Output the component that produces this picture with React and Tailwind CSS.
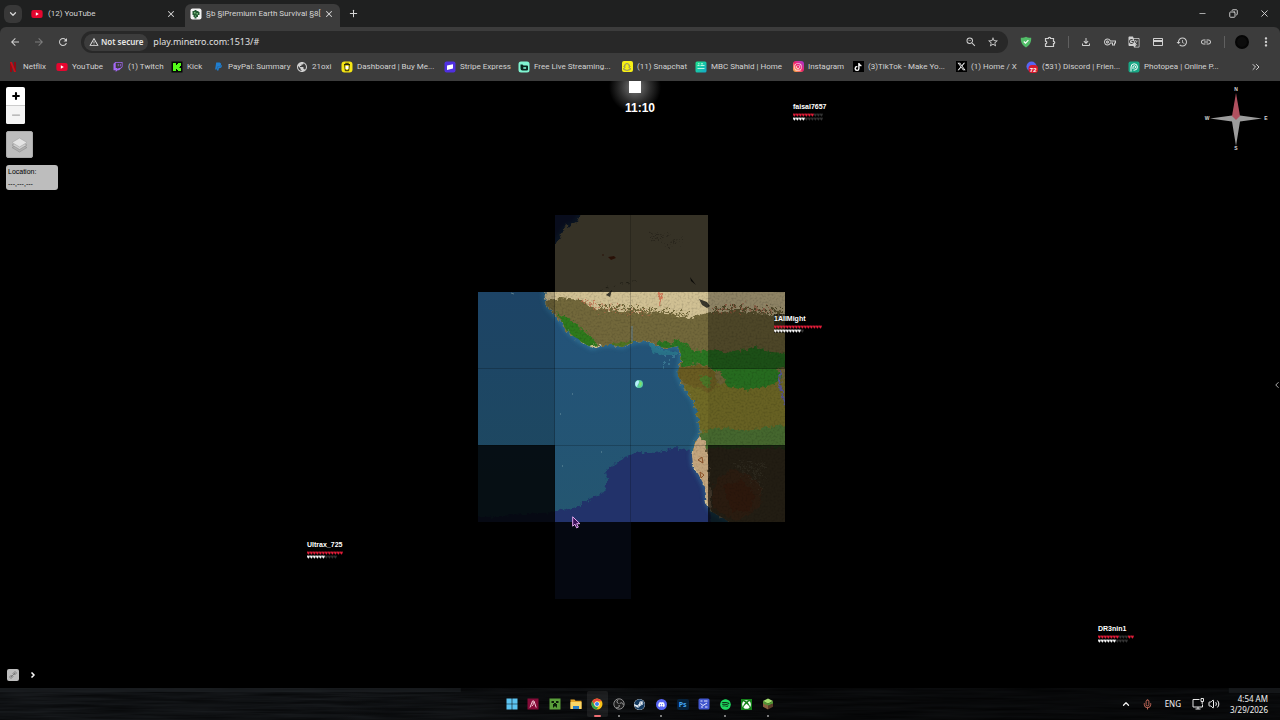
import React, { useState } from 'react';
import { Minus, X, Plus, ChevronDown, ChevronUp, ChevronLeft, ChevronRight, ChevronsRight, Mic, Copy, Volume2 } from 'lucide-react';
import { FaYoutube, FaTwitch, FaPaypal, FaSnapchat, FaInstagram, FaTiktok, FaXTwitter, FaDiscord, FaSteam, FaSpotify, FaXbox } from 'react-icons/fa6';
import {
  MdArrowBack, MdArrowForward, MdRefresh, MdWarningAmber, MdZoomOut, MdStarBorder,
  MdOutlineFileDownload, MdOutlineVpnKey, MdGTranslate, MdCreditCard, MdHistory, MdLink, MdMoreVert, MdPublic
} from 'react-icons/md';

const NetflixIcon = () => (
  <svg viewBox="0 0 12 12" className="w-3 h-3">
    <path d="M3 1h2v10H3z" fill="#8f0b13" />
    <path d="M7 1h2v10H7z" fill="#8f0b13" />
    <path d="M3 1h2l4 10H7z" fill="#c5101b" />
  </svg>
);

const YoutubeIcon = () => <FaYoutube className="w-3 h-3 text-[#e6062f] bg-[linear-gradient(#fff,#fff)] bg-[length:5px_5px] bg-center bg-no-repeat" />;

const KickIcon = () => (
  <svg viewBox="0 0 12 12" className="w-3 h-3">
    <rect x="0.5" y="0.5" width="11" height="11" fill="#050805" />
    <path d="M2 2h3v2h1V3h1V2h3v3H9v1H8v0.500h1V7h1v3H7V9H6V8H5v2H2z" fill="#53fc18" />
  </svg>
);

const StripeIcon = () => (
  <svg viewBox="0 0 12 12" className="w-3 h-3">
    <rect x="0.5" y="0.5" width="11" height="11" rx="2" fill="#4f2fe0" />
    <path d="M3 4.6 9 3.200v4.400L3 9z" fill="#fff" />
  </svg>
);

const CoffeeIcon = () => (
  <svg viewBox="0 0 12 12" className="w-3 h-3">
    <rect x="0.5" y="0.5" width="11" height="11" rx="3" fill="#f5e614" />
    <path d="M3 3.500h6M3.700 3.500 4.300 9.700h3.400l.6-6.200M4.200 2.300h3.600" fill="none" stroke="#2d2908" strokeWidth="1" />
    <path d="M4.500 5h3v3h-3z" fill="#fff" />
  </svg>
);

const StreamIcon = () => (
  <svg viewBox="0 0 12 12" className="w-3 h-3">
    <rect x="0.5" y="0.5" width="11" height="11" rx="2.500" fill="#80f5d2" />
    <path d="M2.500 3.500h2l1 1H9a1 1 0 0 1 1 1v3a1 1 0 0 1-1 1H4.500a2 2 0 0 1-2-2z" fill="#09251d" />
    <path d="M5.300 6.200h2.800v1.600H5.300z" fill="#80f5d2" />
  </svg>
);

const ShahidIcon = () => (
  <svg viewBox="0 0 12 12" className="w-3 h-3">
    <defs>
      <linearGradient id="shahid" x1="0" x2="1" y1="0" y2="1">
        <stop offset="0" stopColor="#1de58b" />
        <stop offset="1" stopColor="#14a7c9" />
      </linearGradient>
    </defs>
    <rect x="0.5" y="0.5" width="11" height="11" rx="1.500" fill="url(#shahid)" />
    <path d="M2.500 4.500h2M5.500 4.500h4M2.500 7.500h7M3 2.800h1.500M6 2.800h2" stroke="#c8ffe8" strokeWidth="0.900" />
  </svg>
);

const PhotopeaIcon = () => (
  <svg viewBox="0 0 12 12" className="w-3 h-3">
    <rect x="0.5" y="0.5" width="11" height="11" rx="2" fill="#18a886" />
    <path d="M3 10.500V6a3.200 3.200 0 1 1 3.200 3.200H5.500M5 8V6a1.300 1.300 0 1 1 1.500 1.300" fill="none" stroke="#fff" strokeWidth="1" />
  </svg>
);

const DiscordBadgeIcon = () => (
  <svg viewBox="0 0 12 12" className="w-3 h-3">
    <circle cx="5.500" cy="5.500" r="5" fill="#5865f2" />
    <rect x="2.500" y="4" width="9.500" height="8" rx="3.500" fill="#d8182c" />
    <text x="7.200" y="10.500" fontSize="6" fontWeight="700" textAnchor="middle" fill="#fff" fontFamily="Liberation Sans, sans-serif">72</text>
  </svg>
);

const Badge = ({ className, children }) => (
  <span className={`w-[11px] h-[11px] flex items-center justify-center ${className}`}>{children}</span>
);

const bookmarks = [
  { label: 'Netflix', width: 'w-[49px]', icon: <NetflixIcon /> },
  { label: 'YouTube', width: 'w-[56px]', icon: <YoutubeIcon /> },
  { label: '(1) Twitch', width: 'w-[59px]', icon: <FaTwitch className="w-[10px] h-[10px] text-[#a468f5]" /> },
  { label: 'Kick', width: 'w-[41px]', icon: <KickIcon /> },
  { label: 'PayPal: Summary', width: 'w-[84px]', icon: <FaPaypal className="w-[9px] h-[9px] text-[#1f7ed0]" /> },
  { label: '21oxi', width: 'w-[45px]', icon: <MdPublic className="w-3 h-3 text-[#d0d0d0]" /> },
  { label: 'Dashboard | Buy Me...', width: 'w-[103px]', icon: <CoffeeIcon /> },
  { label: 'Stripe Express', width: 'w-[74px]', icon: <StripeIcon /> },
  { label: 'Free Live Streaming...', width: 'w-[103px]', icon: <StreamIcon /> },
  { label: '(11) Snapchat', width: 'w-[74px]', icon: <Badge className="bg-[#f7f016] rounded-xs"><FaSnapchat className="w-2 h-2 text-white stroke-[#333] stroke-20" /></Badge> },
  { label: 'MBC Shahid | Home', width: 'w-[97px]', icon: <ShahidIcon /> },
  { label: 'Instagram', width: 'w-[60px]', icon: <Badge className="bg-linear-to-tr from-[#fdb833] via-[#f0186a] to-[#a020d8] rounded-[3px]"><FaInstagram className="w-2 h-2 text-white" /></Badge> },
  { label: '(3)TikTok - Make Yo...', width: 'w-[103px]', icon: <Badge className="bg-black"><FaTiktok className="w-2 h-2 text-white" /></Badge> },
  { label: '(1) Home / X', width: 'w-[71px]', icon: <Badge className="bg-black"><FaXTwitter className="w-[9px] h-[9px] text-white" /></Badge> },
  { label: '(531) Discord | Frien...', width: 'w-[102px]', icon: <DiscordBadgeIcon /> },
  { label: 'Photopea | Online P...', width: 'w-[100px]', icon: <PhotopeaIcon /> },
];

const extensions = [
  { label: 'Downloads', Icon: MdOutlineFileDownload },
  { label: 'Passwords', Icon: MdOutlineVpnKey },
  { label: 'Translate', Icon: MdGTranslate },
  { label: 'Payment methods', Icon: MdCreditCard },
  { label: 'History', Icon: MdHistory },
  { label: 'Copy link', Icon: MdLink },
];

// health and armor: r = red, w = white, g = empty
const players = [
  { name: 'faisal7657', place: 'left-[calc(50%+153px)] top-[21px]', health: 'rrrrrrrggg', armor: 'wwwwgggggg' },
  { name: '1AllMight', place: 'left-[calc(50%+134px)] top-[233px]', health: 'rrrrrrrrrrrrrrrr', armor: 'wwwwwwwwwg', box: true },
  { name: 'Ultrax_725', place: 'left-[calc(50%-333px)] top-[459px]', health: 'rrrrrrrrrrrr', armor: 'wwwwwwgggg' },
  { name: 'DR3nin1', place: 'left-[calc(50%+458px)] top-[543px]', health: 'rrrrrrrgggrr', armor: 'wwwwwwgggg' },
];

const fills = { r: '#e01c38', w: '#f2f2f2', g: '#333333' };

function Meter({ value }) {
  return (
    <svg width={value.length * 3} height="4" viewBox={`0 0 ${value.length * 3} 4`} className="block">
      {value.split('').map((c, i) => (
        <path key={i} transform={`translate(${i * 3} 0)`} d="M.1.600h1l.3.400.3-.4h1v1.500L1.400 3.700.1 2.100z" fill={fills[c]} />
      ))}
    </svg>
  );
}

function TabStrip() {
  return (
    <div className="h-[27px] flex items-stretch bg-[#1f2020] text-[#d6d6d6] text-[8px] font-['Roboto','Noto_Sans',sans-serif]">
      <div className="flex items-center pl-1">
        <button aria-label="Search tabs" className="w-[18px] h-[18px] rounded-md bg-[#383838] flex items-center justify-center">
          <ChevronDown className="w-[10px] h-[10px]" strokeWidth={3} />
        </button>
      </div>
      <div className="w-[163px] flex items-center pl-[9px] pr-[9px]">
        <YoutubeIcon />
        <span className="pl-[5px] flex-1">(12) YouTube</span>
        <button aria-label="Close YouTube tab"><X className="w-[10px] h-[10px]" strokeWidth={2.500} /></button>
      </div>
      <div className="w-[155px] mt-1 rounded-t-md bg-[#3c3c3c] flex items-center pl-[5px] pr-[6px] pb-1">
        <svg viewBox="0 0 12 12" className="w-3 h-3 shrink-0">
          <rect x="0.500" y="0.500" width="11" height="11" rx="2" fill="#f3f3f3" />
          <path d="M2.500 3h2V2h2v1h2v1h1v3H8v2H6.500v1.500H4.500V9h-1V7h-1z" fill="#245a34" />
          <path d="M4 4h1.500v1.500H4zM6.500 5H8v1.500H6.500zM5 7.500h1v1H5z" fill="#7bbd7e" />
        </svg>
        <span className="ml-1 flex-1 whitespace-nowrap">§b §lPremium Earth Survival §8[</span>
        <button aria-label="Close tab"><X className="w-[10px] h-[10px]" strokeWidth={2.500} /></button>
      </div>
      <button aria-label="New tab" className="w-[26px] flex items-center justify-center"><Plus className="w-[11px] h-[11px]" strokeWidth={2.200} /></button>
      <div className="ml-auto flex">
        <button aria-label="Minimize" className="w-[31px] flex items-center justify-center"><Minus className="w-[9px] h-[9px]" /></button>
        <button aria-label="Restore" className="w-[31px] flex items-center justify-center"><Copy className="w-[9px] h-[9px] -scale-x-100" strokeWidth={2.500} /></button>
        <button aria-label="Close window" className="w-[31px] flex items-center justify-center"><X className="w-[11px] h-[11px]" /></button>
      </div>
    </div>
  );
}

function Toolbar() {
  const [url, setUrl] = useState('play.minetro.com:1513/#');

  return (
    <div className="h-[26px] pt-1 pl-[3px] pr-0.5 flex items-center bg-[#3c3c3c] rounded-t-md text-[#d0d0d0]">
      <button aria-label="Back" className="w-6 flex justify-center"><MdArrowBack className="w-3 h-3" /></button>
      <button aria-label="Forward" className="w-6 flex justify-center text-[#7d7d7d]"><MdArrowForward className="w-3 h-3" /></button>
      <button aria-label="Reload" className="w-6 flex justify-center"><MdRefresh className="w-3 h-3" /></button>
      <div className="mx-[6px] flex-1 h-[22px] rounded-full bg-[#282828] flex items-center pl-[3px] pr-1">
        <button className="h-[17px] rounded-full bg-[#3c3c3c] px-[5px] flex items-center gap-[2px] text-[8px] font-semibold text-[#e8e8e8]">
          <MdWarningAmber className="w-[10px] h-[10px]" /> Not secure
        </button>
        <input
          aria-label="Address"
          value={url}
          onChange={e => setUrl(e.target.value)}
          className="ml-[5px] flex-1 bg-transparent text-[9px] text-[#e0e0e0] outline-none"
        />
        <button aria-label="Zoom" className="w-[22px] flex justify-center"><MdZoomOut className="w-3 h-3" /></button>
        <button aria-label="Bookmark this tab" className="w-[22px] flex justify-center"><MdStarBorder className="w-3 h-3" /></button>
      </div>
      <button aria-label="Ad blocker" className="w-6 flex justify-center">
        <svg viewBox="0 0 12 12" className="w-3 h-3">
          <path d="M.8 1.800C3 2 4.500 1.400 6 .7c1.500.7 3 1.300 5.200 1.100.2 4-1.200 7.500-5.200 9.700C2 9.300.6 5.800.8 1.800z" fill="#52bd68" />
          <path d="m3.800 5.500 1.700 1.700 2.900-3" fill="none" stroke="#fff" strokeWidth="1.200" />
        </svg>
      </button>
      <button aria-label="Extensions" className="w-6 flex justify-center">
        <svg viewBox="0 0 12 12" className="w-3 h-3" fill="none" stroke="currentColor" strokeWidth="1.200">
          <path d="M1.500 2.500h2.800a1.200 1.200 0 0 1 2.400 0h2.800v2.800a1.200 1.200 0 0 1 0 2.400v2.800h-8V7.800a1.300 1.300 0 0 0 0-2.600z" />
        </svg>
      </button>
      <span className="mx-[5px] w-0.5 flex justify-center"><span className="w-px h-3 bg-[#606060]"></span></span>
      {extensions.map(({ label, Icon }) => (
        <button key={label} aria-label={label} className="w-6 flex justify-center"><Icon className="w-3 h-3" /></button>
      ))}
      <span className="mx-[5px] w-0.5 flex justify-center"><span className="w-px h-3 bg-[#606060]"></span></span>
      <button aria-label="Profile" className="w-6 flex justify-center">
        <span className="w-[14px] h-[14px] rounded-full bg-[#0c0c0c] border-2 border-[#050505]"></span>
      </button>
      <button aria-label="Menu" className="w-6 flex justify-center"><MdMoreVert className="w-[14px] h-[14px]" /></button>
    </div>
  );
}

function BookmarksBar() {
  return (
    <nav className="h-7 pb-px flex items-center pl-[7px] pr-[18px] bg-[#3c3c3c] text-[#d2d2d2] text-[8px] font-['Roboto','Noto_Sans',sans-serif] overflow-hidden">
      {bookmarks.map(b => (
        <a key={b.label} href="#" className={`${b.width} flex items-center shrink-0 whitespace-nowrap`}>
          <span className="w-3 shrink-0 flex justify-center">{b.icon}</span>
          <span className="ml-1">{b.label}</span>
        </a>
      ))}
      <button aria-label="More bookmarks" className="ml-auto"><ChevronsRight className="w-3 h-3" /></button>
    </nav>
  );
}

function WorldTiles() {
  return (
    <svg viewBox="477 215 308 384" className="absolute left-[calc(50%-163px)] top-[134px] w-[308px] h-[384px]">
      <defs>
        <filter id="rough" x="-5%" y="-5%" width="110%" height="110%">
          <feTurbulence type="fractalNoise" baseFrequency="0.22" numOctaves="3" seed="4" />
          <feDisplacementMap in="SourceGraphic" scale="7" xChannelSelector="R" yChannelSelector="G" />
        </filter>
        <filter id="ragged" x="-5%" y="-20%" width="110%" height="140%">
          <feTurbulence type="fractalNoise" baseFrequency="0.3" numOctaves="3" seed="9" />
          <feDisplacementMap in="SourceGraphic" scale="18" xChannelSelector="R" yChannelSelector="G" />
        </filter>
        <filter id="grain" x="0" y="0" width="100%" height="100%">
          <feTurbulence type="fractalNoise" baseFrequency="0.5" numOctaves="2" seed="2" />
          <feColorMatrix values="0 0 0 0 0  0 0 0 0 0  0 0 0 0 0  1.600 0 0 0 -0.700" />
          <feComposite in2="SourceGraphic" operator="in" />
        </filter>
        <filter id="soft"><feGaussianBlur stdDeviation="2" /></filter>
        <linearGradient id="sea" x1="0" x2="0" y1="292" y2="522" gradientUnits="userSpaceOnUse">
          <stop offset="0" stopColor="#23527a" />
          <stop offset="0.300" stopColor="#235377" />
          <stop offset="1" stopColor="#245670" />
        </linearGradient>
        <clipPath id="loaded">
          <path d="M555 215H708V292H785V522H631V599H555V522H478V292H555z" />
        </clipPath>
        <path id="land" d="M544 288 545 298 548 308 555 315 562 323 567 331 578 340 592 348 603 345 613 345 622 347 633 342 643 341 652 342 658 347 668 348 678 346 681 354 680 365 677 373 683 387 693 400 698 417 701 433 695 443 692 455 693 465 700 477 705 487 707 503 712 512 723 518 735 526H790V210H582L577 222 565 228 560 236 555 245 550 290z" />
        <clipPath id="onland"><use href="#land" /></clipPath>
      </defs>
      <g clipPath="url(#loaded)">
        <rect x="477" y="215" width="308" height="384" fill="url(#sea)" />
        <rect x="554" y="215" width="40" height="50" fill="#20306b" />
        <path d="M470 518 555 512 577 507 587 500 605 492 607 480 605 472 613 465 630 455 640 452 657 453 673 448 687 450 696 452 706 485 712 525V605H470z" fill="#20336a" filter="url(#rough)" />
        <use href="#land" fill="none" stroke="#3a8cae" strokeWidth="4" opacity="0.500" filter="url(#soft)" />
        <path d="M650 342 656 351 668 354 678 354" fill="none" stroke="#2f8f97" strokeWidth="5" opacity="0.500" filter="url(#rough)" />
        <path d="M664 356v12M670 358v8M674 356v6" stroke="#4c94a8" strokeWidth="2" strokeDasharray="2 3" opacity="0.500" filter="url(#rough)" />
        <g filter="url(#rough)">
          <use href="#land" fill="#d1c194" />
          <g clipPath="url(#onland)">
            <path d="M540 302 560 298 580 300 598 309 620 311 640 312 660 313 690 318 710 312 740 311 765 314 790 320V450H680L640 350 560 340z" fill="#72683a" />
            <path d="M676 385 790 380V450H690z" fill="#6f6a28" />
          </g>
        </g>
        <path d="M582 300 598 307 622 310 650 313M712 311 745 308 775 312" fill="none" stroke="#c0664a" strokeWidth="4" strokeDasharray="3 4" opacity="0.700" filter="url(#ragged)" />
        <path d="M600 306 622 308 640 310 662 313 690 316M715 309 750 310 782 313" fill="none" stroke="#72683a" strokeWidth="5" strokeDasharray="4 3" filter="url(#ragged)" />
        <path d="M657 293 662 296 660 306" fill="none" stroke="#d27a58" strokeWidth="2" filter="url(#rough)" />
        <path d="m699 299 8 3 3 4-3 2-5-3zM606 295l6-5-2 7z" fill="#3a382c" />
        <g filter="url(#rough)" clipPath="url(#onland)">
          <path d="M557 313 568 318 580 327 590 336 598 345 588 347 575 339 566 330z" fill="#2f7a1f" />
          <path d="M612 342 625 343 635 340 632 347 612 348z" fill="#4f7423" />
          <path d="M658 341 673 343 677 338 686 344 694 351 710 350 735 352 755 347 770 352 790 353V366L776 368 782 376 776 383 760 388 744 390 728 386 720 372 700 363 683 366 676 351 658 348z" fill="#297420" />
          <path d="M676 368 700 364 716 372 718 386 708 392 690 385 677 378z" fill="#6b5c24" />
          <path d="M700 375 712 378 708 388 702 384z" fill="#4c7427" />
          <path d="M700 432 722 428 745 430 790 424V450H696z" fill="#4b7030" />
          <path d="M688 448H790V530H700L684 465z" fill="#6a5a3a" />
          <path d="M698 436 706 441 709 470 711 522 704 500 697 475 688 460 693 442z" fill="#c4a67e" />
          <path d="M718 478 730 470 750 475 762 488 760 505 748 516 735 520 712 508 712 490z" fill="#a0552c" opacity="0.450" />
          <path d="M722 486 742 480 755 495 750 510 732 512z" fill="#8e4020" opacity="0.600" />
        </g>
        <path d="M735 466 765 464M742 473 766 476M752 463 762 492M765 464 750 484" fill="none" stroke="#a59a78" strokeWidth="2" strokeDasharray="4 2" opacity="0.500" filter="url(#ragged)" />
        <path d="m702 457-4 3 5 3zm-2 15 4 3-3 3z" fill="none" stroke="#8c5127" />
        <path d="M781 370 779 380 782 392 785 405" fill="none" stroke="#5c5aa0" strokeWidth="2" filter="url(#rough)" />
        <path d="M632 326v16" stroke="#607f92" />
        <path d="m655 240 15-5M660 246l18-4M650 236l8-2M682 238l-8 4" stroke="#6b6444" strokeWidth="2" strokeDasharray="3 3" opacity="0.500" filter="url(#ragged)" />
        <path d="m690 277 6 8-5-4z" fill="#2a281c" />
        <path d="m608 257 6-1 2 2-5 2z" fill="#a0441c" />
        <path d="M602 255h2" stroke="#a0441c" />
        <path d="M600 291 622 284 640 280" fill="none" stroke="#77704e" strokeDasharray="3 4" filter="url(#rough)" />
        <path d="M601 452h1M562 466h1M572 394h1M560 414h1M511 293l3 1" stroke="#8bb0b6" opacity="0.700" />
        <rect x="477" y="292" width="308" height="230" clipPath="url(#onland)" filter="url(#grain)" opacity="0.220" />
        {/* tiles that are still fading in */}
        <g fill="#000">
          <rect x="555" y="215" width="153" height="77" opacity="0.740" />
          <rect x="478" y="292" width="77" height="77" opacity="0.160" />
          <rect x="708" y="292" width="77" height="77" opacity="0.320" />
          <rect x="478" y="369" width="77" height="76" opacity="0.150" />
          <rect x="708" y="369" width="77" height="76" opacity="0.080" />
          <rect x="478" y="445" width="77" height="77" opacity="0.820" />
          <rect x="708" y="445" width="77" height="77" opacity="0.680" />
          <rect x="555" y="522" width="76" height="77" opacity="0.840" />
        </g>
        <path d="M554.500 292V522M630.500 215V522M478 368.500H785M478 445.500H785" stroke="#000" strokeOpacity="0.200" fill="none" />
      </g>
    </svg>
  );
}

function Compass() {
  return (
    <svg viewBox="0 0 66 66" className="absolute right-[11px] top-[5px] w-[66px] h-[66px]">
      <path d="M7 32.500 29 29.500 33 28 37 29.500 59 32.500 37 35.500 33 60 29 35.500z" fill="#9c9c9c" />
      <path d="M33 7 37 30 33 34 29 30z" fill="#b0505f" />
      <g fill="#d8d8d8" fontSize="5" fontWeight="700" textAnchor="middle" fontFamily="Liberation Sans, sans-serif">
        <text x="33" y="5">N</text>
        <text x="33" y="64">S</text>
        <text x="4" y="34">W</text>
        <text x="63" y="34">E</text>
      </g>
    </svg>
  );
}

function MapView() {
  return (
    <main className="relative flex-1 min-h-0 overflow-hidden bg-black font-['Liberation_Sans',Arial,sans-serif]">
      <WorldTiles />

      {/* World clock */}
      <div className="absolute left-[calc(50%-31px)] top-[-20px] w-[52px] h-[52px] bg-[radial-gradient(closest-side,#7a7a7a_0%,#5a5a5a_25%,#2c2c2c_60%,transparent_100%)]"></div>
      <div className="absolute left-[calc(50%-11px)] top-0 w-3 h-3 bg-white"></div>
      <div className="absolute inset-x-0 top-5 text-center text-[12px] leading-[15px] font-bold text-white">11:10</div>

      <div className="absolute left-[6px] top-[6px] flex flex-col items-start gap-[7px]">
        <div className="w-[19px] rounded-xs overflow-hidden bg-white">
          <button aria-label="Zoom in" className="w-full h-[19px] border-b border-[#ccc] flex items-center justify-center text-black"><Plus className="w-[10px] h-[10px]" strokeWidth={5} /></button>
          <button aria-label="Zoom out" className="w-full h-[18px] bg-[#f4f4f4] flex items-center justify-center text-[#a8a8a8]"><Minus className="w-[12px] h-[12px]" strokeWidth={2.500} /></button>
        </div>
        <button aria-label="Layers" className="w-[27px] h-[27px] rounded-xs bg-[#bdbdbd] border border-[#aaa] flex items-center justify-center">
          <svg viewBox="0 0 17 16" className="w-[17px] h-4">
            <path d="m1 10.500 7.500 4.500 7.500-4.500-7.500-4z" fill="#b0b0b0" stroke="#8d8d8d" strokeWidth="0.600" />
            <path d="m1 8 7.500 4.500L16 8 8.500 4z" fill="#d0d0d0" stroke="#8d8d8d" strokeWidth="0.600" />
            <path d="M1 5.500 8.500 10 16 5.500 8.500 1z" fill="#e4e4e4" stroke="#a2a2a2" strokeWidth="0.600" />
          </svg>
        </button>
        <div className="w-[52px] h-[25px] rounded-[3px] bg-[#bdbdbd] px-0.5 pt-px text-[7px] leading-[12px] text-black">
          <div>Location:</div>
          <div>---,---,---</div>
        </div>
      </div>

      <Compass />

      {players.map(p => (
        <div key={p.name} className={`absolute ${p.place} ${p.box ? 'bg-black/50' : ''}`}>
          <div className="text-[7px] leading-[9px] mb-[2px] font-bold text-white">{p.name}</div>
          <Meter value={p.health} />
          <Meter value={p.armor} />
        </div>
      ))}

      <svg viewBox="0 0 8 8" className="absolute left-[calc(50%-5px)] top-[299px] w-2 h-2">
        <circle cx="4" cy="4" r="4" fill="#58cfa0" />
        <path d="M.5 2.500C2 0 4 0 4 2S1.500 5 2.500 7.500C.5 6.500-.3 4.500.5 2.500z" fill="#b9ecff" />
        <path d="M5 1.500 7 3 5.500 6.500 4 5z" fill="#7fe06a" />
      </svg>

      <svg viewBox="0 0 9 13" className="absolute left-[calc(50%-68px)] top-[435px] w-[9px] h-[13px]">
        <path d="M.7.8v9.400L3 8.200l1.600 3.700 1.700-.8-1.600-3.400h3.200z" fill="#3a1058" stroke="#e2a8ee" strokeWidth="1" />
      </svg>

      <button aria-label="Open player list" className="absolute right-0 top-[298px] w-2 text-[#cfcfcf]"><ChevronLeft className="w-[10px] h-[12px]" /></button>

      <div className="absolute left-[7px] bottom-[7px] flex items-center gap-2">
        <button aria-label="Link" className="w-3 h-3 rounded-xs bg-[#bdbdbd] flex items-center justify-center">
          <svg viewBox="0 0 10 10" className="w-[10px] h-[10px]">
            <path d="M3 7 7 3" stroke="#777" strokeWidth="1" />
            <path d="m1.500 7 2-2 1.500 1.500-2 2zM5 3.500l2-2L8.500 3l-2 2z" fill="none" stroke="#808080" strokeWidth="1" />
          </svg>
        </button>
        <button aria-label="Open chat" className="w-3 flex justify-center text-white"><ChevronRight className="w-2 h-2" strokeWidth={5} /></button>
      </div>
    </main>
  );
}

const ChromeIcon = () => (
  <svg viewBox="0 0 12 12" className="w-3 h-3">
    <circle cx="6" cy="6" r="5.500" fill="#fbc116" />
    <path d="M6 .5a5.500 5.500 0 0 1 4.800 2.700H6A2.800 2.800 0 0 0 3.500 7.300L1.200 3.300A5.500 5.500 0 0 1 6 .5z" fill="#e8453c" />
    <path d="M1.200 3.300 3.600 7.400A2.800 2.800 0 0 0 7.500 8.300L5.500 11.500A5.500 5.500 0 0 1 1.200 3.300z" fill="#2fa350" />
    <circle cx="6" cy="6" r="2.600" fill="#fff" />
    <circle cx="6" cy="6" r="2" fill="#3b80ee" />
  </svg>
);

const ObsIcon = () => (
  <svg viewBox="0 0 12 12" className="w-3 h-3" fill="none" stroke="#a8a8a8">
    <circle cx="6" cy="6" r="5.200" fill="#1c1c1c" strokeWidth="0.800" />
    <path d="M5.500 5.500C3.500 5 3.500 2.500 5.200 1.800M6.800 5.800c1-1.800 3.500-1 3.400 1.100M6 7c1 1.700-.8 3.300-2.600 2.500" strokeWidth="1" />
  </svg>
);

const apps = [
  { label: 'Start', icon: <svg viewBox="0 0 12 12" className="w-3 h-3"><path d="M.5.5h5.200v5.200H.5zM6.300.5h5.200v5.200H6.300zM.5 6.300h5.200v5.200H.5zM6.300 6.300h5.200v5.200H6.300z" fill="#5cc4f2" /></svg> },
  { label: 'AMD Software', icon: <svg viewBox="0 0 12 12" className="w-3 h-3"><rect x=".5" y=".5" width="11" height="11" fill="#850b38" /><path d="M3 9.500 5.500 3H7l2.200 6.500M6.200 4v2.500L4.800 8.200" fill="none" stroke="#f4c9d8" strokeWidth="1" /></svg> },
  { label: 'Minecraft', icon: <svg viewBox="0 0 12 12" className="w-3 h-3"><rect x=".5" y=".5" width="11" height="11" fill="#5a9e3a" /><path d="M2.500 3h2.500v2H2.500zM7 3h2.500v2H7zM5 5h2v1h1v3.500H7V8.500H5v1H4V6h1z" fill="#0b1d08" /></svg> },
  { label: 'File Explorer', icon: <svg viewBox="0 0 12 12" className="w-3 h-3"><path d="M.5 1.500h4l1 1.300h6v8H.5z" fill="#e8a526" /><path d="M.5 4h11v7H.5z" fill="#fbd667" /><path d="M3 8h6v3H3z" fill="#2b7ec4" /></svg> },
  { label: 'Chrome', icon: <ChromeIcon />, active: true },
  { label: 'OBS Studio', icon: <ObsIcon />, running: true },
  { label: 'Steam', icon: <FaSteam className="w-[11px] h-[11px] rounded-full bg-[#e6edf4] text-[#12385e]" /> },
  { label: 'Discord', icon: <span className="w-[11px] h-[11px] rounded-full bg-[#5865f2] flex items-center justify-center"><FaDiscord className="w-[7px] h-[7px] text-white" /></span>, running: true },
  { label: 'Photoshop', icon: <span className="w-3 h-[11px] rounded-xs bg-[#06213a] text-[#43a7f5] text-[7px] leading-[11px] font-bold text-center">Ps</span> },
  { label: 'Scanner', icon: <svg viewBox="0 0 12 12" className="w-3 h-3"><rect x=".5" y=".5" width="11" height="11" rx="1.500" fill="#4257cf" /><path d="M2.500 3h2M6 3h3.500M2.500 5.500 5 7.500 9 5M3 9h2M7 9h2.500" stroke="#e3e7ff" fill="none" /></svg> },
  { label: 'Spotify', icon: <FaSpotify className="w-[11px] h-[11px] rounded-full bg-[#0c3217] text-[#1ed760]" />, running: true },
  { label: 'Xbox', icon: <span className="w-[11px] h-[11px] bg-[#15801a] flex items-center justify-center"><FaXbox className="w-[9px] h-[9px] text-white" /></span> },
  { label: 'Minecraft Launcher', icon: <svg viewBox="0 0 12 12" className="w-3 h-3"><path d="M6 .5 11 3 6 5.800 1 3z" fill="#a5e070" /><path d="M1 3 6 5.800v5.700L1 8.700z" fill="#8a6040" /><path d="M11 3 6 5.800v5.700l5-2.800z" fill="#5a3c28" /><path d="M1 3 6 5.800v2L4.500 6 3.500 7 1 5zM11 3 6 5.800v1.700l2-.7 1-.8 2-.5z" fill="#4f9a34" /></svg>, running: true },
];

function Taskbar() {
  return (
    <footer className="relative h-8 shrink-0 grid grid-cols-[1fr_277px_1fr] items-stretch bg-[#0b0c0e] text-[#f2f2f2]">
      <svg preserveAspectRatio="none" className="absolute inset-0 w-full h-full">
        <defs>
          <filter id="streaks" x="0" y="0" width="100%" height="100%" colorInterpolationFilters="sRGB">
            <feTurbulence type="fractalNoise" baseFrequency="0.012 0.300" numOctaves="3" seed="7" />
            <feColorMatrix values="0.110 0 0 0 0.005  0.120 0 0 0 0.008  0.130 0 0 0 0.012  0 0 0 0 1" />
          </filter>
          <linearGradient id="dusk">
            <stop offset="0.250" stopColor="#000" stopOpacity="0" />
            <stop offset="0.600" stopColor="#000" stopOpacity="0.500" />
            <stop offset="1" stopColor="#000" stopOpacity="0.500" />
          </linearGradient>
        </defs>
        <rect width="100%" height="100%" filter="url(#streaks)" />
        <rect width="100%" height="100%" fill="url(#dusk)" />
        <rect width="36%" height="4" fill="#1e2124" opacity="0.600" />
        <rect x="96%" width="4%" height="5" fill="#1e2124" opacity="0.600" />
      </svg>
      <div className="relative col-start-2 grid grid-cols-[repeat(13,1fr)]">
        {apps.map(a => (
          <button key={a.label} aria-label={a.label} className={`relative my-[3px] flex items-center justify-center rounded-xs ${a.active ? 'bg-white/7' : ''}`}>
            {a.icon}
            {a.active && <span className="absolute bottom-0 w-[7px] h-0.5 rounded-full bg-[#ee6f73]"></span>}
            {a.running && <span className="absolute bottom-0 w-0.5 h-0.5 rounded-full bg-[#a0a0a0]"></span>}
          </button>
        ))}
      </div>
      <div className="relative flex items-center justify-end pr-3 text-[8px]">
        <button aria-label="Show hidden icons" className="mr-[11px]"><ChevronUp className="w-[10px] h-[10px]" strokeWidth={3} /></button>
        <button aria-label="Microphone" className="mr-3 text-[#d0705f]"><Mic className="w-[11px] h-[11px]" /></button>
        <button className="mr-[11px]">ENG</button>
        <button aria-label="Network and volume" className="mr-[10px] flex items-center gap-1">
          <svg viewBox="0 0 12 12" className="w-3 h-3" fill="none" stroke="#e6e6e6" strokeWidth="1">
            <path d="M7.500 1.500H1v7.500h9.500V6.500M3.500 11h5M6 9v2" />
            <path d="M9 .5h2.500v3H9zM10.200 3.500V6" />
          </svg>
          <Volume2 className="w-3 h-3" />
        </button>
        <div className="text-right leading-[11px]">
          <div>4:54 AM</div>
          <div>3/29/2026</div>
        </div>
      </div>
    </footer>
  );
}

export default function App() {
  return (
    <div className="h-screen flex flex-col overflow-hidden bg-[#1f2020] font-['Noto_Sans','Open_Sans',sans-serif]">
      <header className="shrink-0">
        <TabStrip />
        <Toolbar />
        <BookmarksBar />
      </header>
      <MapView />
      <Taskbar />
    </div>
  );
}
